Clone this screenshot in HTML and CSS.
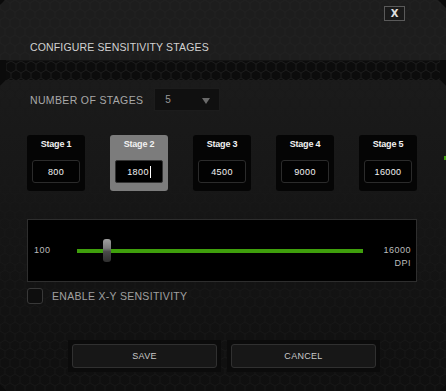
FILE: index.html
```html
<!DOCTYPE html>
<html lang="en">
<head>
    <meta charset="UTF-8">
    <title>Configure Sensitivity Stages</title>
    <link rel="stylesheet" href="styles.css">
</head>
<body>
    <div class="dialog">
        <div class="header">
            <div class="close-row">
                <button class="close-btn">X</button>
            </div>
            <h2 class="title">CONFIGURE SENSITIVITY STAGES</h2>
        </div>
        <div class="band"></div>

        <div class="main">
            <div class="count-row">
                <span class="count-label">NUMBER OF STAGES</span>
                <div class="select">
                    <span>5</span>
                    <span class="arrow"></span>
                </div>
            </div>

            <div class="stages">
                <div class="stage">
                    <div class="stage-name">Stage 1</div>
                    <div class="stage-value">800</div>
                </div>
                <div class="stage active">
                    <div class="stage-name">Stage 2</div>
                    <div class="stage-value">1800<span class="caret"></span></div>
                </div>
                <div class="stage">
                    <div class="stage-name">Stage 3</div>
                    <div class="stage-value">4500</div>
                </div>
                <div class="stage">
                    <div class="stage-name">Stage 4</div>
                    <div class="stage-value">9000</div>
                </div>
                <div class="stage">
                    <div class="stage-name">Stage 5</div>
                    <div class="stage-value">16000</div>
                </div>
            </div>

            <div class="slider-panel">
                <span class="slider-min">100</span>
                <div class="track">
                    <span class="handle" style="left: 9%"></span>
                </div>
                <div class="slider-max">
                    <span>16000</span>
                    <span class="dpi">DPI</span>
                </div>
            </div>

            <label class="check-row">
                <span class="checkbox"></span>
                <span class="check-label">ENABLE X-Y SENSITIVITY</span>
            </label>

            <div class="actions">
                <div class="btn-frame"><button class="action-btn">SAVE</button></div>
                <div class="btn-frame"><button class="action-btn">CANCEL</button></div>
            </div>
        </div>
        <span class="edge-mark"></span>
    </div>
</body>
</html>
```

FILE: styles.css
```css
body {
    margin: 0;
    background: #0b0b0b;
    font-family: "Liberation Sans", Arial, sans-serif;
    color: #cfcfcf;
}
.dialog {
    position: relative;
    width: 446px;
    height: 391px;
    overflow: hidden;
}
.header {
    height: 60px;
    box-sizing: border-box;
    padding: 6px 41px 0 30px;
    background-color: #1d1d1d;
    background-image: url("data:image/svg+xml,%3Csvg xmlns='http://www.w3.org/2000/svg' width='10' height='17.32'%3E%3Cpath d='M5 0L10 2.89V8.66L5 11.55L0 8.66V2.89Z M5 11.55V17.32' fill='none' stroke='%23212121' stroke-width='0.8'/%3E%3C/svg%3E");
    clip-path: polygon(5px 0, 438px 0, 446px 8px, 446px 60px, 0 60px, 0 5px);
}
.close-row {
    display: flex;
    justify-content: flex-end;
}
.close-btn {
    width: 21px;
    height: 15px;
    padding: 0;
    background: #1a1a1a;
    border: 1px solid #5a5a5a;
    color: #e0e0e0;
    font-family: "DejaVu Sans", sans-serif;
    font-size: 10px;
    font-weight: bold;
    line-height: 13px;
}
.title {
    margin: 20px 0 0;
    font-size: 10.5px;
    font-weight: normal;
    letter-spacing: 0.15px;
    color: #d2d2d2;
}
.band {
    height: 20px;
    margin: 0 6px;
    background-color: #0c0c0c;
    background-image: url("data:image/svg+xml,%3Csvg xmlns='http://www.w3.org/2000/svg' width='10' height='17.32'%3E%3Cpath d='M5 0L10 2.89V8.66L5 11.55L0 8.66V2.89Z M5 11.55V17.32' fill='none' stroke='%23202020' stroke-width='0.8'/%3E%3C/svg%3E");
    border-top: 1px solid #141414;
    box-sizing: border-box;
}
.main {
    height: 311px;
    box-sizing: border-box;
    padding: 8px 29px 0 27px;
    background-color: #141414;
    background-image: url("data:image/svg+xml,%3Csvg xmlns='http://www.w3.org/2000/svg' width='10' height='17.32'%3E%3Cpath d='M5 0L10 2.89V8.66L5 11.55L0 8.66V2.89Z M5 11.55V17.32' fill='none' stroke='%23191919' stroke-width='0.8'/%3E%3C/svg%3E"), linear-gradient(#1b1b1b, #0f0f0f);
    clip-path: polygon(6px 0, 440px 0, 446px 6px, 446px 304px, 439px 311px, 7px 311px, 0 304px, 0 6px);
}
.count-row {
    display: flex;
    align-items: center;
    gap: 11px;
    padding-left: 3px;
}
.count-label {
    font-size: 10.5px;
    letter-spacing: 0.35px;
    color: #a8a8a8;
}
.select {
    width: 66px;
    height: 23px;
    box-sizing: border-box;
    display: flex;
    align-items: center;
    justify-content: space-between;
    padding: 0 9px 0 10px;
    background: #101010;
    border: 1px solid #1c1c1c;
    font-size: 10px;
    color: #9a9a9a;
}
.arrow {
    width: 0;
    height: 0;
    border-left: 4px solid transparent;
    border-right: 4px solid transparent;
    border-top: 6px solid #6a6a6a;
    margin-top: 3px;
}
.stages {
    display: flex;
    gap: 25px;
    margin-top: 24px;
}
.stage {
    width: 58px;
    height: 56px;
    box-sizing: border-box;
    padding: 2px 5px 0;
    background: #050505;
    border-radius: 3px;
    display: flex;
    flex-direction: column;
    align-items: center;
}
.stage.active {
    background: #7c7c7c;
}
.stage-name {
    font-size: 9px;
    font-weight: bold;
    color: #f2f2f2;
    height: 14px;
    line-height: 14px;
    letter-spacing: -0.2px;
}
.stage-value {
    margin-top: 9px;
    width: 48px;
    height: 23px;
    box-sizing: border-box;
    border: 1px solid #2b2b2b;
    border-radius: 3px;
    background: #020202;
    display: flex;
    align-items: center;
    justify-content: center;
    font-size: 9px;
    color: #f4f4f4;
    letter-spacing: 0.4px;
}
.stage.active .stage-value {
    background: #000;
    border-color: #333;
    border-radius: 2px;
}
.caret {
    width: 1px;
    height: 12px;
    background: #fff;
    margin-left: 1px;
}
.slider-panel {
    position: relative;
    margin-top: 28px;
    width: 390px;
    height: 63px;
    box-sizing: border-box;
    background: #000;
    border: 1px solid #2e2e2e;
    display: flex;
    align-items: flex-start;
    padding: 24px 5px 0 6px;
    font-size: 9px;
    color: #bcbcbc;
    letter-spacing: 0.5px;
}
.slider-min {
    width: 43px;
    line-height: 12px;
}
.track {
    position: relative;
    width: 286px;
    height: 4px;
    margin-top: 5px;
    background: #3f9f0c;
}
.handle {
    position: absolute;
    top: -10px;
    width: 8px;
    height: 23px;
    border-radius: 3px;
    background: linear-gradient(#a0a0a0 0%, #7a7a7a 40%, #4a4a4a 55%, #2e2e2e 100%);
}
.slider-max {
    margin-left: auto;
    display: flex;
    flex-direction: column;
    align-items: flex-end;
    line-height: 12px;
    gap: 1px;
}
.check-row {
    display: flex;
    align-items: center;
    gap: 9px;
    margin-top: 6px;
}
.checkbox {
    width: 16px;
    height: 16px;
    box-sizing: border-box;
    border: 1px solid #383838;
    border-radius: 3px;
    background: #0e0e0e;
}
.check-label {
    font-size: 10.5px;
    letter-spacing: 0.3px;
    color: #a0a0a0;
}
.actions {
    display: flex;
    gap: 6px;
    margin: 36px 0 0 41px;
}
.btn-frame {
    padding: 4px;
    background: #0b0b0b;
}
.action-btn {
    display: block;
    width: 145px;
    height: 24px;
    background: #171717;
    border: 1px solid #303030;
    border-radius: 3px;
    color: #c8c8c8;
    font-family: "Liberation Sans", Arial, sans-serif;
    font-size: 9px;
    letter-spacing: 0.3px;
}
.edge-mark {
    position: absolute;
    right: 0;
    top: 156px;
    width: 2px;
    height: 4px;
    background: #3f9f0c;
}
```
